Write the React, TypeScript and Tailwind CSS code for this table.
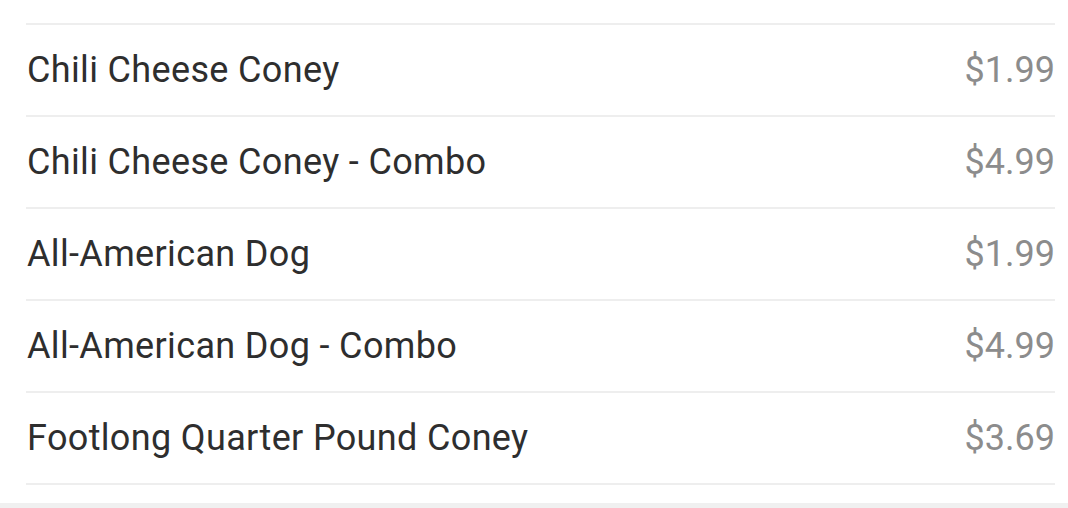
const items = [
  { name: 'Chili Cheese Coney', price: '$1.99' },
  { name: 'Chili Cheese Coney - Combo', price: '$4.99' },
  { name: 'All-American Dog', price: '$1.99' },
  { name: 'All-American Dog - Combo', price: '$4.99' },
  { name: 'Footlong Quarter Pound Coney', price: '$3.69' },
];

export default function App() {
  return (
    <div className="w-[1068px] h-[508px] bg-[#f0f0f0] font-['Roboto',sans-serif] overflow-hidden">
      <div className="bg-white pt-[23px] pb-[18px] pl-[26px] pr-[13px]">
        <div className="border-b-2 border-[#eeeeee]">
          {items.map((item) => (
            <div
              key={item.name}
              className="flex items-center justify-between h-[92px] border-t-2 border-[#eeeeee] pl-px"
            >
              <span className="text-[36px] tracking-[0.35px] text-[#2e2e2e]">{item.name}</span>
              <span className="text-[36px] text-[#8c8c8c]">{item.price}</span>
            </div>
          ))}
        </div>
      </div>
    </div>
  );
}
